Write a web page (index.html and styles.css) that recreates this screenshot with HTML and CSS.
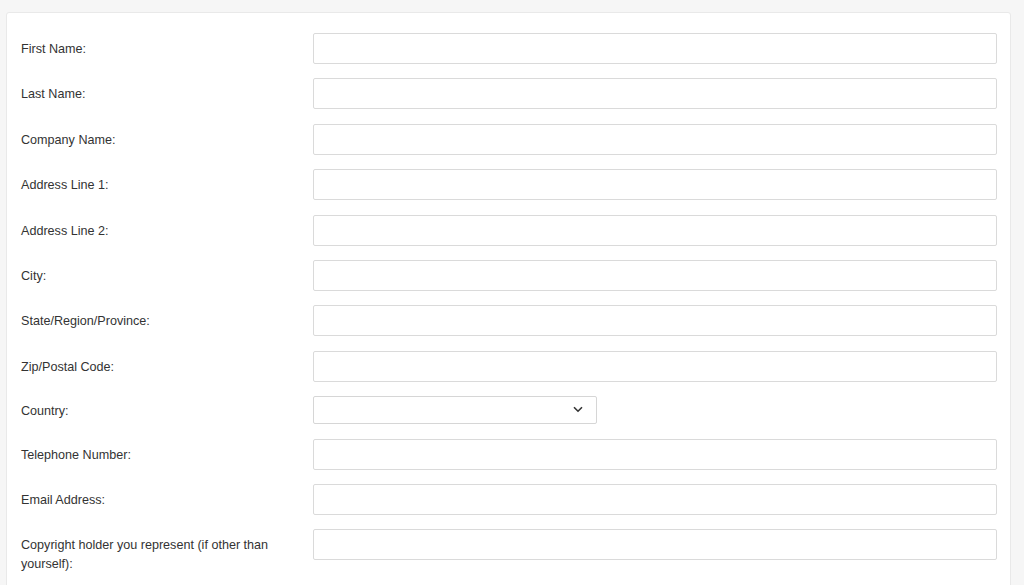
FILE: index.html
```html
<!DOCTYPE html>
<html lang="en">
<head>
  <meta charset="UTF-8">
  <meta name="viewport" content="width=device-width, initial-scale=1.0">
  <title>Contact Details</title>
  <link rel="stylesheet" href="styles.css">
</head>
<body>
  <div class="card">
    <form class="form">
      <div class="row">
        <label class="label" for="first-name">First Name:</label>
        <input class="field" id="first-name" type="text">
      </div>
      <div class="row">
        <label class="label" for="last-name">Last Name:</label>
        <input class="field" id="last-name" type="text">
      </div>
      <div class="row">
        <label class="label" for="company">Company Name:</label>
        <input class="field" id="company" type="text">
      </div>
      <div class="row">
        <label class="label" for="address-1">Address Line 1:</label>
        <input class="field" id="address-1" type="text">
      </div>
      <div class="row">
        <label class="label" for="address-2">Address Line 2:</label>
        <input class="field" id="address-2" type="text">
      </div>
      <div class="row">
        <label class="label" for="city">City:</label>
        <input class="field" id="city" type="text">
      </div>
      <div class="row">
        <label class="label" for="state">State/Region/Province:</label>
        <input class="field" id="state" type="text">
      </div>
      <div class="row">
        <label class="label" for="zip">Zip/Postal Code:</label>
        <input class="field" id="zip" type="text">
      </div>
      <div class="row">
        <label class="label label-select" for="country">Country:</label>
        <div class="select-wrap">
          <select class="select" id="country">
            <option></option>
          </select>
          <svg class="chevron" width="10" height="7" viewBox="0 0 10 7">
            <path d="M1 1.2 L5 5.2 L9 1.2" fill="none" stroke="#333" stroke-width="1.6"/>
          </svg>
        </div>
      </div>
      <div class="row">
        <label class="label" for="phone">Telephone Number:</label>
        <input class="field" id="phone" type="text">
      </div>
      <div class="row">
        <label class="label" for="email">Email Address:</label>
        <input class="field" id="email" type="text">
      </div>
      <div class="row">
        <label class="label" for="holder">Copyright holder you represent (if other than yourself):</label>
        <input class="field" id="holder" type="text">
      </div>
    </form>
  </div>
</body>
</html>
```

FILE: styles.css
```css
html, body {
  margin: 0;
  background: #f6f6f6;
  font-family: "Liberation Sans", Arial, Helvetica, sans-serif;
  color: #333;
}

.card {
  margin: 12px 13px 0 6px;
  background: #fff;
  border: 1px solid #e9e9e9;
  border-radius: 3px;
  padding: 20px 13px 20px 14px;
}

.form {
  display: flex;
  flex-direction: column;
  gap: 14.4px;
}

.row {
  display: grid;
  grid-template-columns: 292px 1fr;
  align-items: start;
}

.label {
  font-size: 12.6px;
  line-height: 19px;
  padding-top: 7px;
  padding-right: 10px;
}

.label-select {
  padding-top: 6px;
}

.field {
  box-sizing: border-box;
  height: 31px;
  width: 100%;
  margin: 0;
  border: 1px solid #dadada;
  border-radius: 2px;
  background: #fff;
}

.select-wrap {
  position: relative;
  width: 284px;
}

.select {
  appearance: none;
  -webkit-appearance: none;
  box-sizing: border-box;
  display: block;
  width: 284px;
  height: 28px;
  margin: 0;
  border: 1px solid #d6d6d6;
  border-radius: 2px;
  background: #fff;
}

.chevron {
  position: absolute;
  top: 10px;
  left: 260px;
}
```
